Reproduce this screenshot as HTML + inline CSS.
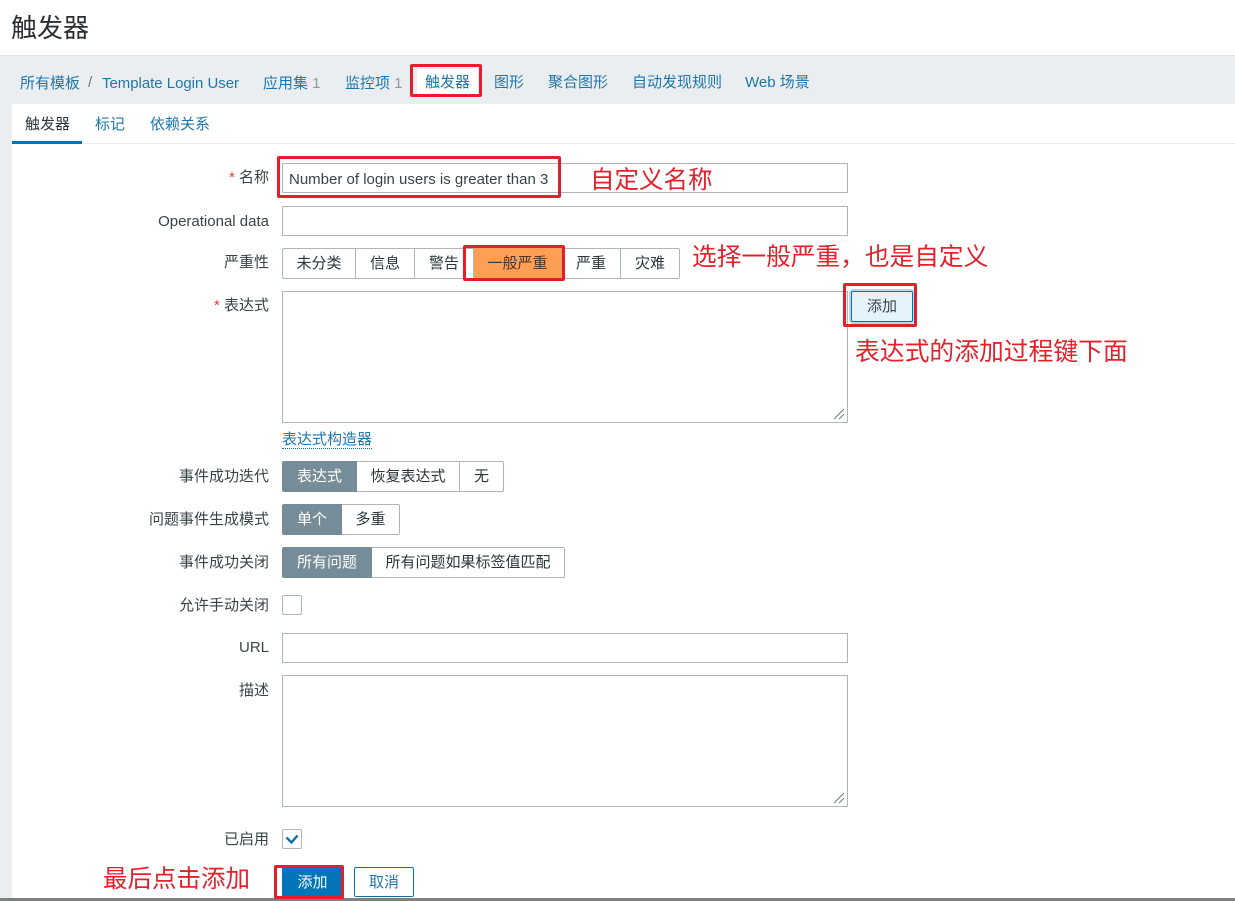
<!DOCTYPE html>
<html><head><meta charset="utf-8"><style>
html,body{margin:0;padding:0;background:#fff}
#p{position:relative;width:1235px;height:901px;overflow:hidden;background:#fff;font-family:"Liberation Sans","Noto Sans CJK SC",sans-serif;font-size:15px;color:#2b363c}
#p div{position:absolute;box-sizing:border-box;white-space:nowrap}
.t{line-height:20px}
.a{color:#1f76ab;line-height:20px}
.l{right:966px;line-height:20px;color:#38434a;text-align:right}
.i{left:282px;width:566px;background:#fff;border:1px solid #acb6bc}
.s{border:1px solid #acb6bc;background:#fff;text-align:center;color:#2b363c;line-height:29px;height:31px;border-left:0}
.d{background:#768d99;color:#fff;border:0;border-radius:2px 0 0 2px;line-height:31px}
.r{border:3px solid #e31f2b;border-radius:2px;background:transparent}
.n{color:#e3212b;font-size:24.5px;line-height:32px}
.c{left:282px;width:20px;height:20px;border:1px solid #acb6bc;border-radius:2px;background:#fff}
.g{position:absolute;right:2px;bottom:2px}
</style></head><body><div id="p">
<div style="left:0;top:55px;width:1235px;height:49px;background:#ebeef1;border-top:1px solid #dfe3e6"></div>
<div style="left:0;top:104px;width:12px;height:794px;background:#ebeef1"></div>
<div style="left:0;top:898px;width:1235px;height:3px;background:#7d8181"></div>
<div style="left:11px;top:10px;font-size:26px;line-height:36px;color:#2a2f33">触发器</div>

<div class="a" style="left:20px;top:74px">所有模板</div>
<div class="t" style="left:88px;top:73px;color:#6a777e">/</div>
<div class="a" style="left:102px;top:74px;font-size:14.95px">Template Login User</div>
<div class="a" style="left:263px;top:74px">应用集 <span style="color:#8c989f">1</span></div>
<div class="a" style="left:345px;top:74px">监控项 <span style="color:#8c989f">1</span></div>
<div style="left:417px;top:69px;width:61px;height:26px;background:#fff"></div>
<div class="a" style="left:425px;top:73px">触发器</div>
<div class="a" style="left:494px;top:73px">图形</div>
<div class="a" style="left:548px;top:73px">聚合图形</div>
<div class="a" style="left:632px;top:73px">自动发现规则</div>
<div class="a" style="left:745px;top:73px">Web 场景</div>

<div style="left:12px;top:143px;width:1223px;height:1px;background:#ebeef1"></div>
<div style="left:12px;top:141px;width:70px;height:3px;background:#0275b8"></div>
<div class="t" style="left:25px;top:115px">触发器</div>
<div class="a" style="left:95px;top:115px">标记</div>
<div class="a" style="left:150px;top:115px">依赖关系</div>

<div class="l" style="top:168px"><span style="color:#d64541">*</span> 名称</div>
<div class="l" style="top:212px">Operational data</div>
<div class="l" style="top:253px">严重性</div>
<div class="l" style="top:296px"><span style="color:#d64541">*</span> 表达式</div>
<div class="l" style="top:467px">事件成功迭代</div>
<div class="l" style="top:510px">问题事件生成模式</div>
<div class="l" style="top:553px">事件成功关闭</div>
<div class="l" style="top:596px">允许手动关闭</div>
<div class="l" style="top:638px">URL</div>
<div class="l" style="top:681px">描述</div>
<div class="l" style="top:830px">已启用</div>

<div class="i" style="top:163px;height:30px;padding:6px 6px;line-height:20px;font-size:15px;color:#38434a">Number of login users is greater than 3</div>
<div class="i" style="top:206px;height:30px"></div>

<div class="s" style="left:282px;top:248px;width:74px;border-left:1px solid #acb6bc;border-radius:2px 0 0 2px">未分类</div>
<div class="s" style="left:356px;top:248px;width:59px">信息</div>
<div class="s" style="left:415px;top:248px;width:59px">警告</div>
<div class="s" style="left:474px;top:248px;width:88px;background:#ff9f55;border-color:#ff9f55;color:#4a3526">一般严重</div>
<div class="s" style="left:562px;top:248px;width:59px">严重</div>
<div class="s" style="left:621px;top:248px;width:59px;border-radius:0 2px 2px 0">灾难</div>

<div class="i" style="top:291px;height:132px"><svg class="g" width="12" height="12"><path d="M1 11L11 1M6 11L11 6" stroke="#6d777d" fill="none"/></svg></div>
<div class="a" style="left:282px;top:430px;height:19px;border-bottom:1px dotted #0f6fa8">表达式构造器</div>

<div class="s d" style="left:282px;top:461px;width:75px">表达式</div>
<div class="s" style="left:357px;top:461px;width:103px">恢复表达式</div>
<div class="s" style="left:460px;top:461px;width:44px;border-radius:0 2px 2px 0">无</div>

<div class="s d" style="left:282px;top:504px;width:60px">单个</div>
<div class="s" style="left:342px;top:504px;width:58px;border-radius:0 2px 2px 0">多重</div>

<div class="s d" style="left:282px;top:547px;width:90px">所有问题</div>
<div class="s" style="left:372px;top:547px;width:193px;border-radius:0 2px 2px 0">所有问题如果标签值匹配</div>

<div class="c" style="top:595px"></div>
<div class="i" style="top:633px;height:30px"></div>
<div class="i" style="top:675px;height:132px"><svg class="g" width="12" height="12"><path d="M1 11L11 1M6 11L11 6" stroke="#6d777d" fill="none"/></svg></div>
<div class="c" style="top:829px"><svg style="position:absolute;left:2px;top:3px" width="14" height="12"><path d="M1.5 4.5L6.5 9.5L12.5 2.5" stroke="#0f6fa8" stroke-width="2.4" fill="none"/></svg></div>

<div style="left:851px;top:291px;width:62px;height:31px;background:#e5f3fd;border:1px solid #0f6fa8;border-radius:2px;box-shadow:0 0 0 2px #b5d8f2;text-align:center;line-height:30px;color:#38434a">添加</div>

<div style="left:282px;top:867px;width:61px;height:30px;background:#0275b8;color:#fff;text-align:center;line-height:32px;border-radius:2px">添加</div>
<div style="left:354px;top:867px;width:60px;height:30px;background:#fff;color:#1f76ab;border:1px solid #0f6fa8;text-align:center;line-height:29px;border-radius:2px">取消</div>

<div class="r" style="left:410px;top:64px;width:72px;height:33px"></div>
<div class="r" style="left:277px;top:156px;width:284px;height:42px"></div>
<div class="r" style="left:463px;top:245px;width:102px;height:36px"></div>
<div class="r" style="left:843px;top:283px;width:74px;height:44px"></div>
<div class="r" style="left:274px;top:865px;width:70px;height:34px"></div>

<div class="n" style="left:590px;top:165px">自定义名称</div>
<div class="n" style="left:692px;top:242px;font-size:24.7px">选择一般严重，也是自定义</div>
<div class="n" style="left:855px;top:337px;font-size:24.8px">表达式的添加过程键下面</div>
<div class="n" style="left:103px;top:864px">最后点击添加</div>
</div></body></html>
